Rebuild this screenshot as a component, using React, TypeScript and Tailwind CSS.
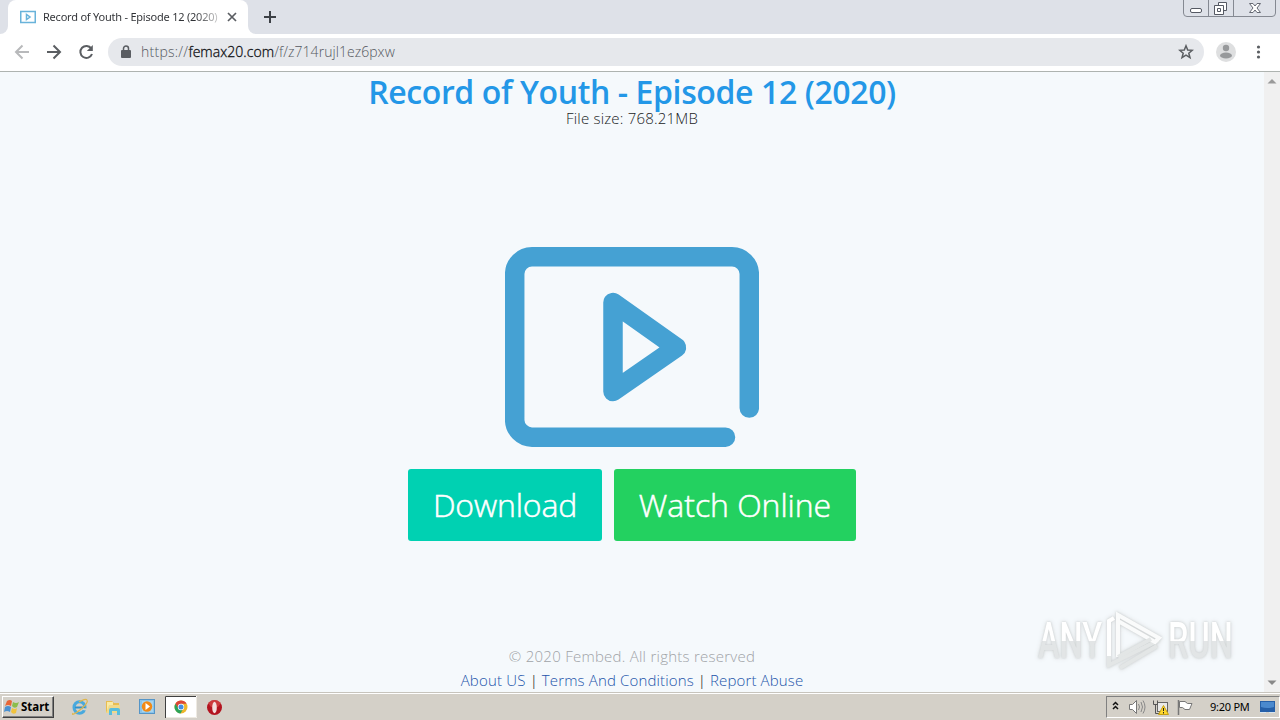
import type { ReactNode } from "react";

function PlayFrame({ className, stroke }: { className: string; stroke: string }) {
  return (
    <svg className={className} viewBox="0 0 254 200" fill="none" stroke={stroke} strokeWidth="19.5" strokeLinecap="round" strokeLinejoin="round">
      <path d="M220.5 190.2H27C17.5 190.2 9.7 182 9.7 173V27C9.7 17.5 17.5 9.8 27 9.8H227C236.500 9.800 244.300 17.500 244.300 27V161" />
      <path d="M108 55.500V144.500L171.500 100.500Z" />
    </svg>
  );
}

function WindowControls() {
  return (
    <svg className="ml-auto mr-[3px] h-[17px] w-[94px]" viewBox="0 0 94 17" fill="none" stroke="#858992">
      <path d="M.5 0V13Q.5 16.500 4 16.500H89Q92.500 16.500 92.500 13V0M25.500 0V16M50.500 0V16" />
      <rect x="7.500" y="8.500" width="11" height="4" rx="1.500" fill="#fff" stroke="#555963" />
      <path d="M35.500 2.500H43.500V10.500H35.500Z" fill="#fff" stroke="#555963" />
      <path d="M31.500 5.500H40.500V14.500H31.500Z" fill="#fff" stroke="#555963" />
      <path d="M34.500 8.500H37.500V11.500H34.500Z" stroke="#555963" />
      <path d="M66.500 3.500H70L72 6L74 3.500H77.500L74 8L77.500 12.500H74L72 10L70 12.500H66.500L70 8Z" fill="#fff" stroke="#656973" />
    </svg>
  );
}

function TabStrip() {
  return (
    <div className="flex h-[34px] items-start bg-[#dee1e8]">
      <div className="flex h-[34px] w-2 items-end bg-white">
        <div className="h-full w-full rounded-br-lg bg-[#dee1e8]" />
      </div>
      <div className="flex h-[34px] w-60 items-center rounded-t-lg bg-white pl-3">
        <svg className="h-[14px] w-4 shrink-0" viewBox="0 0 16 14" fill="none" stroke="#69b3da" strokeWidth="1.500">
          <path d="M.75 1.500H15.250V12.500H.75Z" />
          <path d="M6.500 4.500V9.500L10 7Z" />
        </svg>
        <div className="ml-[7px] w-[177px] overflow-hidden whitespace-nowrap bg-[linear-gradient(90deg,#303236_86%,#d8d8d8)] bg-clip-text font-['Noto_Sans','Open_Sans',sans-serif] text-[11px] leading-[18px] tracking-[-0.220px] text-transparent">
          Record of Youth - Episode 12 (2020)
        </div>
        <svg className="ml-[6px] h-3 w-3 shrink-0" viewBox="0 0 12 12" stroke="#5a5d62" strokeWidth="1.700">
          <path d="M2 2L10 10M10 2L2 10" />
        </svg>
      </div>
      <div className="h-[34px] w-2 bg-white">
        <div className="h-full w-full rounded-bl-lg bg-[#dee1e8]" />
      </div>
      <svg className="ml-[7px] mt-[10px] h-[14px] w-[14px]" viewBox="0 0 14 14" stroke="#3c4046" strokeWidth="2">
        <path d="M7 1V13M1 7H13" />
      </svg>
      <WindowControls />
    </div>
  );
}

function Toolbar() {
  return (
    <div className="flex h-[38px] items-center border-b border-[#aeb3b0] bg-white font-['Open_Sans','Noto_Sans',sans-serif]">
      <svg className="h-full w-[108px] shrink-0" viewBox="0 0 108 37" fill="none" strokeWidth="2">
        <path d="M29 18H16M22.500 11.500L16 18L22.500 24.500" stroke="#b8b9bb" />
        <path d="M47 18H60M53.500 11.500L60 18L53.500 24.500" stroke="#5b5e62" />
        <path d="M91.300 14.500A6 6 0 1 0 92 20" stroke="#5b5e62" />
        <path d="M92.800 11V17H86.800Z" fill="#5b5e62" />
      </svg>
      <div className="-mt-px flex h-7 w-[1096px] items-center rounded-full bg-[#e6e8ec] pl-[13px] pr-[10px]">
        <svg className="h-[14px] w-[10px]" viewBox="0 0 10 14">
          <path d="M2.500 6V3.500a2.500 2.500 0 0 1 5 0V6" fill="none" stroke="#5a5d62" strokeWidth="1.500" />
          <rect y="5" width="10" height="8" rx="1" fill="#5a5d62" />
        </svg>
        <div className="-mt-px ml-[10px] whitespace-nowrap text-[14px] font-light leading-5 tracking-[0.050px] text-[#55595f]">
          <span className="tracking-[0.250px]">https://</span><span className="text-[#101114] [-webkit-text-stroke:0.3px_#101114]">femax20.com</span>/f/z714rujl1ez6pxw
        </div>
        <svg className="ml-auto h-4 w-4" viewBox="0 0 16 16" fill="none" stroke="#5b5e62" strokeWidth="1.500">
          <path d="M8 1.800L9.700 6L14.300 6.300L10.800 9.200L12 13.700L8 11.200L4 13.700L5.200 9.200L1.700 6.300L6.300 6Z" />
        </svg>
      </div>
      <svg className="-mt-px ml-3 h-5 w-5" viewBox="0 0 20 20">
        <circle cx="10" cy="10" r="10" fill="#dedfe0" />
        <circle cx="10" cy="6" r="3.200" fill="#97999b" />
        <ellipse cx="10" cy="13.500" rx="6" ry="3" fill="#97999b" />
      </svg>
      <svg className="-mt-px ml-[20px] h-4 w-1 overflow-visible" viewBox="0 0 4 16" fill="#5b5e62">
        <circle cx="2.500" cy="3" r="1.600" /><circle cx="2.500" cy="8" r="1.600" /><circle cx="2.500" cy="13" r="1.600" />
      </svg>
    </div>
  );
}

function Watermark() {
  const word = "flex h-[40px] w-max origin-left scale-x-[0.650] items-center bg-[linear-gradient(#ffffff_50%,#e2e5e6_50%)] bg-clip-text font-['Roboto','Liberation_Sans',sans-serif] text-[50px] font-medium leading-[40px] text-transparent";
  return (
    <div className="absolute left-[1038px] top-[537px] flex h-16 w-[198px] items-center [filter:drop-shadow(0_0_1px_#c9cdce)_drop-shadow(0_0_2px_#dfe2e3)]">
      <div className="w-[64px]"><div className={word}>ANY</div></div>
      <svg className="mx-[4px] h-[62px] w-[60px] shrink-0" viewBox="0 0 60 62" fill="none" strokeWidth="4">
        <path d="M3 48V11L8 8" stroke="#fff" />
        <path d="M3 46V55L53 30" stroke="#e3e6e6" />
        <path d="M12 47V5L53 28L49 32L12 11" stroke="#fafbfb" />
        <path d="M12 47L45 29M14 58L51 36" stroke="#e3e6e6" />
      </svg>
      <div className="-ml-[2px] w-[64px]"><div className={word}>RUN</div></div>
    </div>
  );
}

function FileButton({ children, className }: { children: ReactNode; className: string }) {
  return <button className={"h-[72px] rounded-[3px] pb-px pt-px text-[32px] font-light leading-[68px] text-white [-webkit-text-stroke:0.5px_white] " + className}>{children}</button>;
}

function PageContent() {
  return (
    <div className="relative flex h-[620px] bg-[#f5f9fc] font-['Open_Sans','Noto_Sans',sans-serif]">
      <main className="flex w-[1264px] flex-col items-center whitespace-nowrap">
        <h1 className="mt-[2px] h-[34px] text-[32px] font-semibold leading-9 tracking-[-0.390px] text-[#2397e7]">Record of Youth - Episode 12 (2020)</h1>
        <p className="h-5 text-[15px] font-light leading-5 tracking-[0.200px] text-[#202224]">File size: 768.21MB</p>
        <PlayFrame className="mt-[119px] h-[200px] w-[254px]" stroke="#45a1d3" />
        <div className="mt-[22px] flex gap-3">
          <FileButton className="w-[194px] bg-[#00d1b2] tracking-[-0.150px]">Download</FileButton>
          <FileButton className="w-[242px] bg-[#23d160] tracking-[-0.050px]">Watch Online</FileButton>
        </div>
        <footer className="mt-[103px] text-center text-[15px] font-light leading-6">
          <p className="tracking-[0.250px] text-[#a0a3a7]">© 2020 Fembed. All rights reserved</p>
          <p className="tracking-[0.050px] text-black"><a className="tracking-[0.200px] text-[#1c54aa]">About US</a> | <a className="tracking-[0.150px] text-[#1c54aa]">Terms And Conditions</a> | <a className="tracking-[0.150px] text-[#1c54aa]">Report Abuse</a></p>
        </footer>
      </main>
      <div className="flex w-4 flex-col justify-between bg-[#f0f0f0] py-[6px]">
        <svg className="h-[6px] w-4" viewBox="0 0 16 6"><path d="M3.500 5.500L8 1L12.500 5.500Z" fill="#999" /></svg>
        <svg className="h-[6px] w-4" viewBox="0 0 16 6"><path d="M3.500 .500L8 5L12.500 .500Z" fill="#888" /></svg>
      </div>
      <Watermark />
    </div>
  );
}

function QuickLaunch() {
  return (
    <svg className="h-[26px] w-[180px]" viewBox="54 694 180 26">
      <ellipse cx="79.500" cy="707.500" rx="5.500" ry="5.800" fill="none" stroke="#48a9de" strokeWidth="3" />
      <path d="M75 707.500H85" stroke="#2e91cc" strokeWidth="2" />
      <path d="M83 709L89 710" stroke="#d4d0c8" strokeWidth="2" />
      <path d="M73 713C69 719 90 704 87 700C86 698 81 701 79 702" fill="none" stroke="#dfb64c" strokeWidth="1.200" />
      <path d="M106 701H112L114 703H119V713H106Z" fill="#e8bd50" />
      <path d="M107 702H113V711H107Z" fill="#f9eaa5" />
      <path d="M109 705H120V713H106Z" fill="#f0d98a" />
      <path d="M109 715V710Q109 708 111 708H118Q120 708 120 710V715H117V711H112V715Z" fill="#58bddc" />
      <rect x="139.500" y="699.500" width="15" height="14" fill="#89c4eb" stroke="#5595c7" />
      <rect x="142" y="701" width="11" height="11" fill="#a7d4ee" />
      <circle cx="147" cy="706.500" r="5.200" fill="#f18a16" />
      <path d="M145.500 703V710L150 706.500Z" fill="#fff" />
      <path d="M165 696H197V718H165Z" fill="#fff" />
      <path d="M165.500 718V696.500H196" fill="none" stroke="#404040" />
      <path d="M196.500 697V717.500H166" fill="none" stroke="#eeeae2" />
      <circle cx="181" cy="707" r="6.500" fill="#edb62c" />
      <path d="M175.400 703.700A6.500 6.500 0 0 1 186.600 703.700H181L178.200 709Z" fill="#dc4637" />
      <path d="M175.400 703.700L178.800 709L182.500 710L180.500 713.500A6.500 6.500 0 0 1 175.400 703.700Z" fill="#2ba359" />
      <circle cx="181" cy="707" r="3.200" fill="#fff" /><circle cx="181" cy="707" r="2.500" fill="#428de3" />
      <circle cx="214.500" cy="707.500" r="7.500" fill="#b31420" />
      <path d="M208 703Q214.500 697 221 703L218 707H211Z" fill="#dc5250" opacity=".6" />
      <ellipse cx="214.500" cy="707.500" rx="2.300" ry="5.800" fill="#f3dedd" />
    </svg>
  );
}

function Tray() {
  return (
    <div className="ml-auto flex h-[22px] w-[174px] items-center whitespace-nowrap border border-b-white border-l-[#808080] border-r-white border-t-[#808080]">
      <svg className="h-5 w-[91px] shrink-0" viewBox="1107 697 91 20" fill="none">
        <path d="M1113 705L1115.500 702.500L1118 705M1113 709L1115.500 706.500L1118 709" stroke="#111" strokeWidth="1.500" />
        <path d="M1129.500 704.500H1132.500L1136.500 700.500V713.500L1132.500 709.500H1129.500Z" fill="#fff" stroke="#777" />
        <path d="M1138.500 704Q1140.500 707 1138.500 710M1141 702Q1144 707 1141 712M1143 700.500Q1147 707 1143 713.500" stroke="#888" />
        <rect x="1157.500" y="702.500" width="10" height="9" fill="#e9e9e9" stroke="#666" />
        <path d="M1153.500 700.500V704.500H1157.500V700.500M1155.500 705V713.500H1168" stroke="#555" />
        <path d="M1163.500 705.500L1168.500 714.500H1158.500Z" fill="#ffd82d" stroke="#c6a012" />
        <path d="M1163.500 708V711M1163.500 712V713.500" stroke="#222" />
        <path d="M1178.500 700V715" stroke="#777" strokeWidth="1.500" />
        <path d="M1179.500 701.500H1185L1187.500 703.500H1192L1189.500 709.500H1185L1182.500 707.500H1179.500Z" fill="#fff" stroke="#777" />
      </svg>
      <span className="ml-[12px] w-[45px] font-['Noto_Sans',sans-serif] text-[11px] leading-5 tracking-[-0.250px] text-black">9:20 PM</span>
      <svg className="ml-[5px] h-4 w-4" viewBox="0 0 16 16"><rect y="2" width="15" height="11" fill="#255fa8" /><path d="M1 3H14V8Q7 10 1 8Z" fill="#4a89ce" /><path d="M0 13.500H6M9 13.500H15" stroke="#d7e4ef" /></svg>
    </div>
  );
}

function Taskbar() {
  return (
    <div className="flex h-7 items-start border-t border-[#c7c4bd] bg-[#d4d0c8]">
      <div className="flex h-[27px] w-full items-center border-t border-white">
        <div className="ml-[2px] flex h-[22px] w-[52px] items-center border border-b-[#404040] border-l-white border-r-[#404040] border-t-white pl-px shadow-[inset_-1px_-1px_#808080]">
          <svg className="h-4 w-4" viewBox="0 0 16 16">
            <path d="M3 2Q6 0 8 2L7 7Q4 5 1 7Z" fill="#e76637" />
            <path d="M9 3Q12 5 15 3L13 8Q10 10 8 7Z" fill="#8cbd4b" />
            <path d="M1 8Q4 6 7 8L6 13Q3 11 0 13Z" fill="#4a91d1" />
            <path d="M8 9Q11 11 13 9L12 14Q9 16 7 13Z" fill="#f1c33d" />
          </svg>
          <span className="ml-px font-['Noto_Sans',sans-serif] text-[11.500px] font-bold leading-5 text-black">Start</span>
        </div>
        <QuickLaunch />
        <Tray />
      </div>
    </div>
  );
}

export default function App() {
  return (
    <div className="flex h-[720px] w-[1280px] flex-col overflow-hidden">
      <TabStrip />
      <Toolbar />
      <PageContent />
      <Taskbar />
    </div>
  );
}
